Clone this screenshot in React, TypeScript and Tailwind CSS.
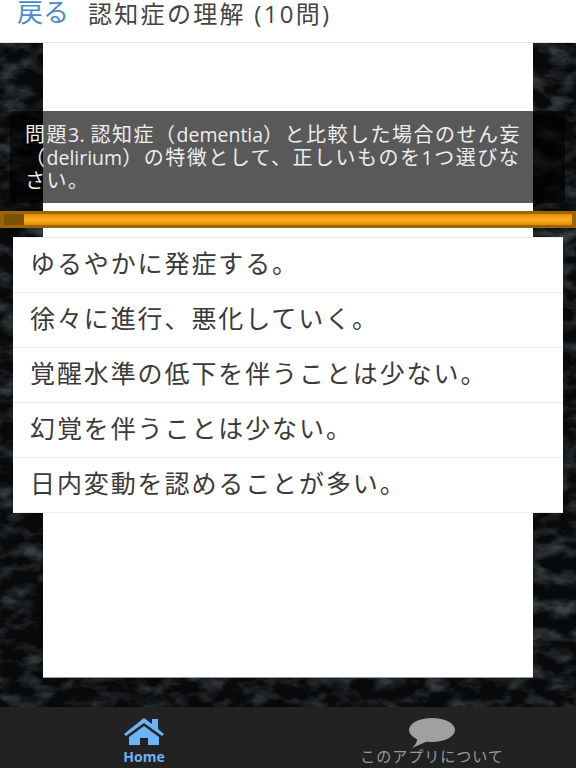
import React from 'react';

const font = { fontFamily: '"Open Sans", "Noto Sans CJK JP", sans-serif' };

const choices = [
  'ゆるやかに発症する。',
  '徐々に進行、悪化していく。',
  '覚醒水準の低下を伴うことは少ない。',
  '幻覚を伴うことは少ない。',
  '日内変動を認めることが多い。',
];

const Texture = () => (
  <svg className="absolute inset-0 h-full w-full" aria-hidden="true">
    <filter id="stone">
      <feTurbulence type="fractalNoise" baseFrequency="0.04 0.07" numOctaves="4" seed="7" />
      <feColorMatrix values="0 0 0 0 0.1  0 0 0 0 0.12  0 0 0 0 0.14  1.5 0 0 0 -0.64" />
    </filter>
    <rect width="100%" height="100%" fill="#08090a" />
    <rect width="100%" height="100%" filter="url(#stone)" />
  </svg>
);

export default function App() {
  return (
    <div className="flex h-[768px] w-[576px] flex-col overflow-hidden bg-white" style={font}>
      <header className="flex h-[43px] shrink-0 items-center border-b border-[#e4e4e4] bg-white pl-[17px] pb-[13px]">
        <span className="w-[71px] -translate-y-[3px] text-[26px] leading-none text-[#4a8ccc]">戻る</span>
        <h1 className="-translate-y-[1px] text-[24px] font-normal leading-none tracking-[2.3px] text-[#444]">認知症の理解 (10問)</h1>
      </header>

      <main className="relative flex-1 bg-[#0a0b0c]">
        <Texture />
        <div className="relative mx-[43px] h-[635px] border-b border-[#999] bg-white" />

        <div className="absolute left-[10px] right-[11px] top-[68px] flex h-[92px] items-center rounded-[4px] bg-black/65 pl-[15px]">
          <p className="whitespace-nowrap text-[20px] leading-[23px] tracking-[1.5px] text-[#eee]">
            問題<span className="text-[19.5px] tracking-[0.4px]">3. </span>認知症（<span className="text-[19.5px] tracking-normal">dementia</span>）と比較した場合のせん妄
            <br />
            （<span className="text-[19.5px] tracking-normal">delirium</span>）の特徴として、正しいものを<span className="text-[19.5px]">1</span>つ選びな
            <br />
            さい。
          </p>
        </div>

        <div className="absolute inset-x-0 top-[168px] flex h-[17px] border-y-[3px] border-x-[4px] border-[#9a6508] bg-gradient-to-b from-[#e08e08] via-[#ffad1c] to-[#e08e08]">
          <div className="h-full w-[20px] bg-[#7c5206]" />
        </div>

        <ul className="absolute left-[13px] right-[13px] top-[194px] border-b border-[#eee] bg-white">
          {choices.map((c) => (
            <li
              key={c}
              className="flex h-[55px] items-center border-t border-[#ececec] pb-[3px] pl-[17px] text-[25px] leading-none tracking-[1.9px] text-[#3a3a3a]"
            >
              {c}
            </li>
          ))}
        </ul>
      </main>

      <nav className="flex h-[61px] shrink-0 bg-[#222]">
        <div className="flex w-[288px] flex-col items-center pt-[11px]">
          <svg viewBox="0 0 40 27" className="h-[27px] w-[40px] fill-[#6db3f8]" aria-hidden="true">
            <path d="M20 0 L28 6 V1 H34 V11 L40 16 L38 18 L20 5 L2 18 L0 16 Z" />
            <path d="M20 8 L35 19 V27 H24 V20 H16 V27 H5 V19 Z" />
          </svg>
          <span className="mt-[3px] text-[14px] font-bold leading-[18px] text-[#6db3f8]">Home</span>
        </div>
        <div className="flex w-[288px] flex-col items-center pt-[11px]">
          <svg viewBox="0 0 48 30" className="h-[30px] w-[48px] fill-[#a0a0a0]" aria-hidden="true">
            <ellipse cx="24" cy="12" rx="23" ry="12" />
            <path d="M9 19 L20 23 L4 30 Q10 25 9 19 Z" />
          </svg>
          <span className="-mt-[1px] text-[15px] leading-[18px] tracking-[1px] text-[#999]">このアプリについて</span>
        </div>
      </nav>
    </div>
  );
}
